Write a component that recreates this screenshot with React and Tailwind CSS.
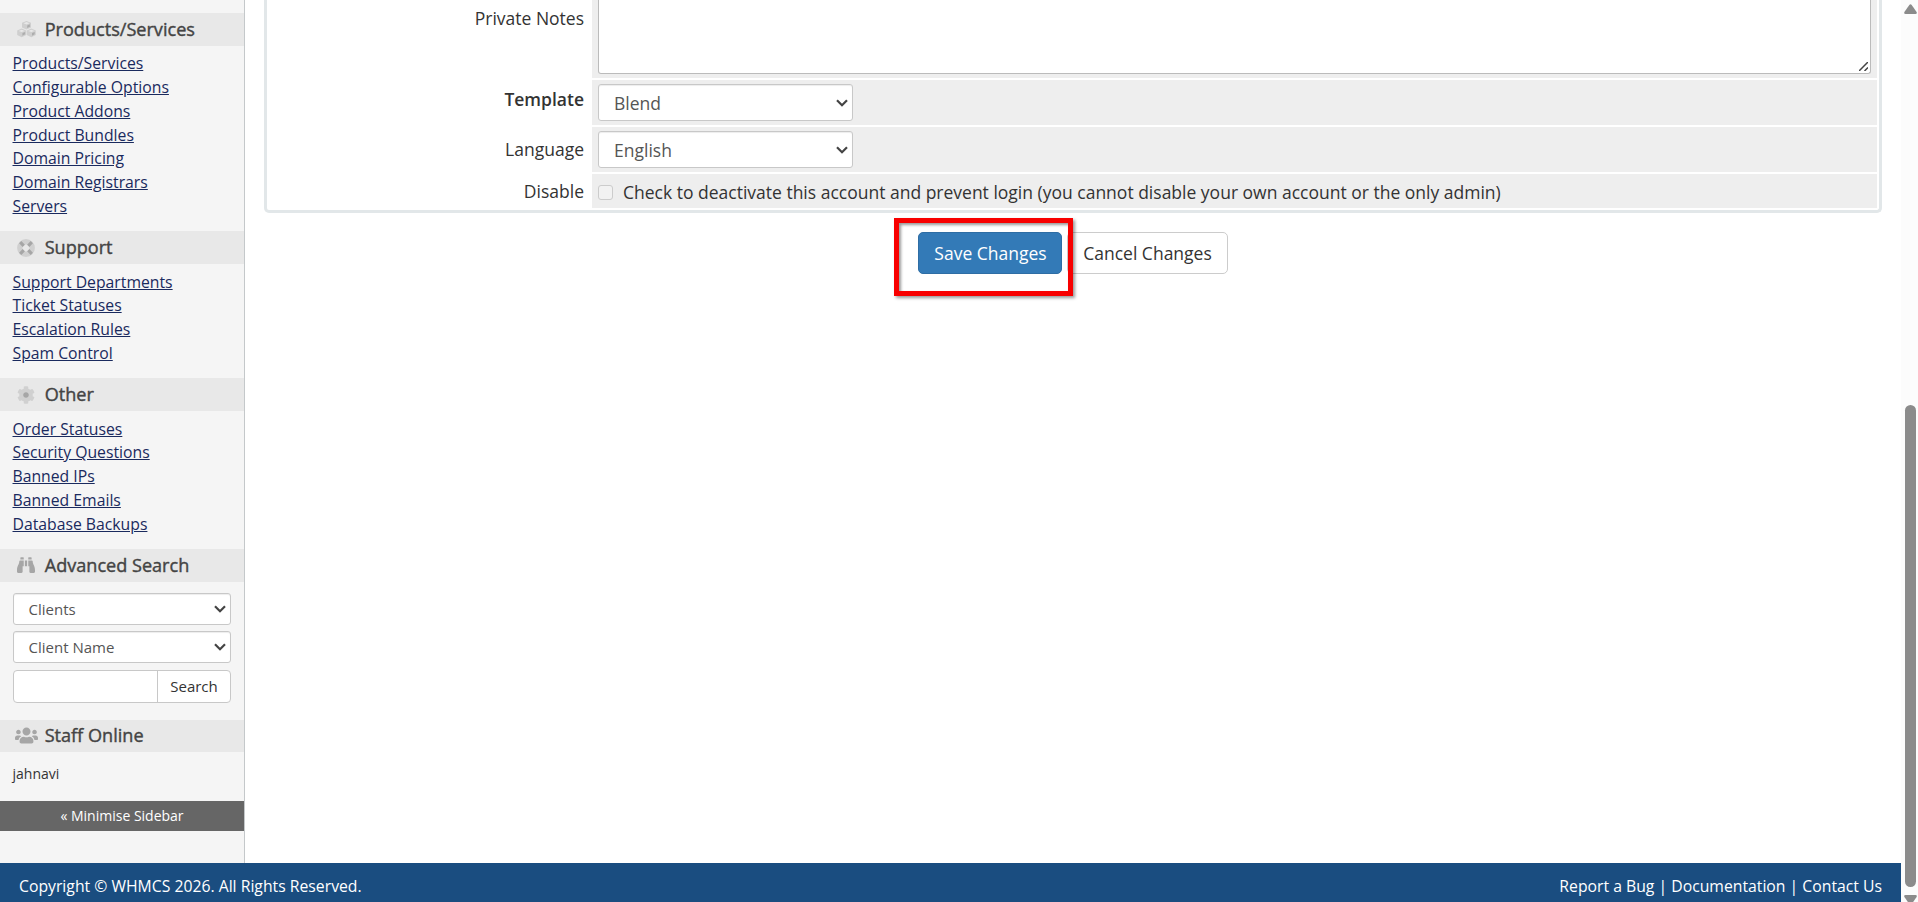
import { FaBinoculars, FaCog, FaUsers } from 'react-icons/fa'

const productLinks = [
  'Products/Services',
  'Configurable Options',
  'Product Addons',
  'Product Bundles',
  'Domain Pricing',
  'Domain Registrars',
  'Servers',
]
const supportLinks = ['Support Departments', 'Ticket Statuses', 'Escalation Rules', 'Spam Control']
const otherLinks = ['Order Statuses', 'Security Questions', 'Banned IPs', 'Banned Emails', 'Database Backups']

function Cube({ x, y }) {
  return (
    <g transform={`translate(${x} ${y})`}>
      <path d="M4.500 0 9 1.800V6.400L4.500 8.600 0 6.400V1.800z" fill="#cfcfcf" />
      <path d="m1.500 2.300 3-1.200 3 1.200-3 1.200z" fill="#e8e8e8" />
      <path d="M5.200 4.400 7.900 3.300V5.700L5.200 7.100z" fill="#adadad" />
    </g>
  )
}

function CubesIcon() {
  return (
    <svg viewBox="0 0 19 17" className="h-[17px] w-[19px]">
      <Cube x={5} y={0} />
      <Cube x={0.2} y={7.6} />
      <Cube x={9.8} y={7.6} />
    </svg>
  )
}

function LifeRingIcon() {
  return (
    <svg viewBox="0 0 18 18" className="h-[18px] w-[18px]" fill="none">
      <circle cx="9" cy="9" r="6.200" stroke="#d0d0d0" strokeWidth="5.400" />
      <path d="M3.200 3.200 6.800 6.800M14.800 3.200 11.200 6.800M3.200 14.800l3.600-3.600M14.800 14.800l-3.600-3.600" stroke="#a6a6a6" strokeWidth="3.200" />
    </svg>
  )
}

function GearIcon() {
  return (
    <svg viewBox="0 0 18 18" className="h-[18px] w-[18px]">
      <circle cx="9" cy="9" r="3.400" fill="#a6a6a6" />
      <FaCog size={18} color="#d0d0d0" />
    </svg>
  )
}

function SectionHeader({ icon, children }) {
  return (
    <div className="flex h-[32.500px] items-center bg-[#e8e8e8] pl-[13.500px] text-[18.100px] text-[#444] [-webkit-text-stroke:0.400px_#444]">
      <span className="mr-[6.200px] flex w-[25px] justify-center text-[#a6a6a6]">{icon}</span>
      {children}
    </div>
  )
}

function LinkList({ items }) {
  return (
    <ul className="pt-[6.800px] pb-[12.500px] pl-[12.500px] text-[15.750px] leading-[23.800px]">
      {items.map((item) => (
        <li key={item}>
          <a href="#" className="text-[#1a2a5e] underline">{item}</a>
        </li>
      ))}
    </ul>
  )
}

function Caret() {
  return (
    <svg viewBox="0 0 12 8" className="h-2 w-3" fill="none" stroke="#444" strokeWidth="2.200">
      <path d="m1 1.200 5 5 5-5" />
    </svg>
  )
}

function SidebarSelect({ value }) {
  return (
    <div className="flex h-8 items-center justify-between rounded-[3px] border border-[#c8c8c8] bg-white pr-1 pl-[14.500px] text-[15px] text-[#555] shadow-[inset_0_1px_1px_rgba(0,0,0,0.075)]">
      <span className="pt-px">{value}</span>
      <Caret />
    </div>
  )
}

function FormSelect({ value }) {
  return (
    <div className="flex h-[37px] w-[255px] items-center justify-between rounded-[3px] border border-[#c8c8c8] bg-white pr-1 pl-[15px] text-[17.500px] text-[#555] shadow-[inset_0_1px_1px_rgba(0,0,0,0.075)]">
      <span className="pt-[2px]">{value}</span>
      <Caret />
    </div>
  )
}

function Sidebar() {
  return (
    <aside className="w-[245px] shrink-0 border-r border-[#c4c8ca] bg-[#f5f5f5] pt-[13px]">
      <SectionHeader icon={<CubesIcon />}>Products/Services</SectionHeader>
      <LinkList items={productLinks} />
      <SectionHeader icon={<LifeRingIcon />}>Support</SectionHeader>
      <LinkList items={supportLinks} />
      <SectionHeader icon={<GearIcon />}>Other</SectionHeader>
      <LinkList items={otherLinks} />
      <SectionHeader icon={<FaBinoculars size={18} />}>Advanced Search</SectionHeader>
      <div className="flex flex-col gap-[6px] px-[13px] pt-[11.500px] pb-[17px]">
        <SidebarSelect value="Clients" />
        <SidebarSelect value="Client Name" />
        <div className="mt-[0.500px] flex h-[33px] rounded-[4px] border border-[#c8c8c8] bg-white text-[15px] text-[#333]">
          <div className="flex-1" />
          <div className="flex w-[73px] items-center justify-center border-l border-[#c8c8c8]">Search</div>
        </div>
      </div>
      <SectionHeader icon={<FaUsers size={23} />}>Staff Online</SectionHeader>
      <div className="flex h-[48.500px] items-center pl-[12.500px] text-[14px] text-[#333]">
        <span className="-mt-[6px]">jahnavi</span>
      </div>
      <div className="flex h-[30px] items-center justify-center bg-[#666] text-[14px] text-white">« Minimise Sidebar</div>
    </aside>
  )
}

function AdminForm() {
  return (
    <div className="ml-[19px] flex h-[213px] w-[1618px] flex-col gap-[2px] rounded-b-[5px] border-x-3 border-b-3 border-[#e2e7e9] px-[2px] pb-[2px] text-[17.500px]">
      <div className="flex h-[78px]">
        <div className="w-[323px] pt-[5px] pr-2 text-right">Private Notes</div>
        <div className="flex-1 bg-[#eee] pr-[6px] pb-1 pl-[6px]">
          <div className="flex h-[74px] items-end justify-end rounded-b-[3px] border-x border-b border-[#bbb] bg-white p-[2px]">
            <svg viewBox="0 0 9 9" className="h-[9px] w-[9px]" stroke="#444" strokeWidth="1.500">
              <path d="M0 9 9 0M5.500 9 9 5.500" />
            </svg>
          </div>
        </div>
      </div>
      <div className="flex h-[45px]">
        <div className="w-[323px] pt-[6px] pr-2 text-right font-semibold">Template</div>
        <div className="flex-1 bg-[#eee] pt-1 pl-[6px]">
          <FormSelect value="Blend" />
        </div>
      </div>
      <div className="flex h-[45px]">
        <div className="w-[323px] pt-[9px] pr-2 text-right">Language</div>
        <div className="flex-1 bg-[#eee] pt-1 pl-[6px]">
          <FormSelect value="English" />
        </div>
      </div>
      <div className="flex h-[34px]">
        <div className="w-[323px] pt-1 pr-2 text-right">Disable</div>
        <div className="flex flex-1 items-center bg-[#eee] pt-[2px] pl-[6px]">
          <span className="mr-[10px] h-[15px] w-[15px] rounded-[3px] border border-[#ccc] bg-[#f2f2f2]" />
          Check to deactivate this account and prevent login (you cannot disable your own account or the only admin)
        </div>
      </div>
    </div>
  )
}

function Scrollbar() {
  return (
    <div className="flex w-[17px] shrink-0 flex-col items-center bg-[#fcfcfc] pt-1 pl-px">
      <svg viewBox="0 0 13 10" className="h-[10px] w-[13px] shrink-0" fill="#8b8b8b">
        <path d="M5.300 1Q6.500-.6 7.700 1L12.600 8Q13.300 10 11.500 10H1.500Q-.3 10 .4 8z" />
      </svg>
      <div className="mt-[391px] h-[482px] w-[11px] shrink-0 rounded-full bg-[#8b8b8b]" />
      <svg viewBox="0 0 13 7" className="mt-2 h-[7px] w-[13px] shrink-0" fill="#8b8b8b">
        <path d="M1.500 0h10q1.800 0 1.100 2L9.100 7H3.900L.4 2Q-.3 0 1.500 0" />
      </svg>
    </div>
  )
}

export default function App() {
  return (
    <div className="flex h-[902px] w-[1918px] overflow-hidden bg-white font-['Open_Sans',sans-serif] text-[#333]">
      <div className="flex min-w-0 flex-1 flex-col">
        <div className="flex h-[863px]">
          <Sidebar />
          <main className="flex-1">
            <AdminForm />
            <div className="relative mt-[19px] ml-[673px] flex gap-[5px] text-[17.500px]">
              <button className="h-[42px] w-[144px] rounded-[5px] border border-[#2e6da4] bg-[#337ab7] pl-px text-white">Save Changes</button>
              <button className="h-[42px] w-[161px] rounded-[5px] border border-[#ccc] bg-white">Cancel Changes</button>
              <div className="absolute -top-[14px] -left-[24px] h-[78px] w-[179px] border-5 border-[#f80000] shadow-[2px_2px_3px_rgba(0,0,0,0.4),inset_2px_2px_3px_rgba(0,0,0,0.4)]" />
            </div>
          </main>
        </div>
        <footer className="flex h-[39px] items-center justify-between bg-[#1a4d80] pt-[8px] pr-[19px] pl-[19px] text-[15.750px] text-white">
          <span>Copyright © WHMCS 2026. All Rights Reserved.</span>
          <span>Report a Bug | Documentation | Contact Us</span>
        </footer>
      </div>
      <Scrollbar />
    </div>
  )
}
